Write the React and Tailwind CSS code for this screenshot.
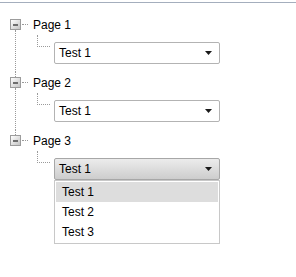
import React from "react";

function Arrow() {
  return (
    <svg width="7" height="4" viewBox="0 0 7 4" className="block">
      <polygon points="0,0 7,0 3.5,4" fill="#1a1a1a" />
    </svg>
  );
}

function Combo({ pressed, open }) {
  return (
    <div className="relative">
      <div
        className={
          pressed
            ? "w-[166px] h-[22px] rounded-[2px] border border-[#a7a7a7] bg-gradient-to-b from-[#ececec] to-[#cdcdcd] flex items-center justify-between pl-[4px] pr-[7px]"
            : "w-[166px] h-[22px] rounded-[2px] border border-[#b3b3b3] bg-white flex items-center justify-between pl-[4px] pr-[7px]"
        }
      >
        <span className="text-[12px] leading-none text-black">Test 1</span>
        <Arrow />
      </div>
      {open && (
        <div className="absolute left-0 top-full mt-[0px] w-[166px] border border-[#c8c8c8] bg-white p-[1px] z-10">
          <div className="h-[20px] flex items-center pl-[6px] bg-[#dddddd] text-[12px] text-black">Test 1</div>
          <div className="h-[20px] flex items-center pl-[6px] text-[12px] text-black">Test 2</div>
          <div className="h-[20px] flex items-center pl-[6px] text-[12px] text-black">Test 3</div>
        </div>
      )}
    </div>
  );
}

function Expander() {
  return (
    <div className="w-[11px] h-[11px] border border-[#9c9c9c] bg-gradient-to-br from-[#ffffff] to-[#c4c4c4] flex items-center justify-center shrink-0">
      <div className="w-[5px] h-[2px] bg-[#6e6e6e]" />
    </div>
  );
}

function Item({ label, first, last, pressed, open }) {
  return (
    <div className="flex">
      <div className="w-[11px] flex flex-col items-center">
        <div className={first ? "h-[5px]" : "h-[5px] border-l border-dotted border-[#9a9a9a]"} />
        <Expander />
        <div className={last ? "flex-1" : "flex-1 border-l border-dotted border-[#9a9a9a]"} />
      </div>
      <div className={last ? "flex flex-col" : "flex flex-col pb-[8px]"}>
        <div className="h-[21px] flex items-center">
          <div className="ml-[1px] w-[6px] border-t border-dotted border-[#9a9a9a]" />
          <span className="ml-[5px] text-[12px] leading-none text-black">{label}</span>
        </div>
        <div className="flex items-start">
          <div className="ml-[16px] w-[13px] h-[12px] border-l border-b border-dotted border-[#9a9a9a]" />
          <div className="ml-[4px] mt-[7px]">
            <Combo pressed={pressed} open={open} />
          </div>
        </div>
      </div>
    </div>
  );
}

export default function App() {
  return (
    <div
      className="relative w-[296px] h-[277px] bg-white overflow-hidden"
      style={{ fontFamily: '"Liberation Sans", Arial, sans-serif' }}
    >
      <div className="h-[2px] bg-white" />
      <div className="h-[1px] bg-[#a4aebd]" />
      <div className="pl-[10px] pt-[11px]">
        <Item label="Page 1" first />
        <Item label="Page 2" />
        <Item label="Page 3" last pressed open />
      </div>
    </div>
  );
}
